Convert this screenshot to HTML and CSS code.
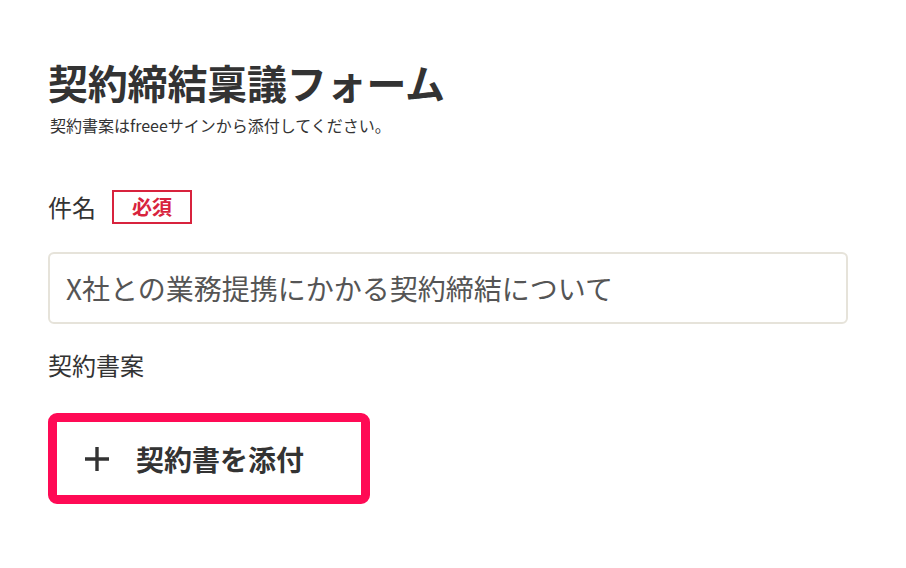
FILE: index.html
```html
<!DOCTYPE html>
<html lang="ja">
<head>
<meta charset="utf-8">
<link rel="stylesheet" href="styles.css">
</head>
<body>
<main class="form">
  <header class="head">
    <h1 class="title">契約締結稟議フォーム</h1>
    <p class="lead">契約書案はfreeeサインから添付してください。</p>
  </header>
  <section class="field">
    <div class="label-row">
      <span class="label">件名</span>
      <span class="badge">必須</span>
    </div>
    <div class="input">X社との業務提携にかかる契約締結について</div>
  </section>
  <section class="field field-attach">
    <div class="label-row">
      <span class="label">契約書案</span>
    </div>
    <div class="attach">
      <span class="plus"><svg width="24" height="24" viewBox="0 0 24 24"><path d="M12 0V24M0 12H24" stroke="#333" stroke-width="3.4" fill="none"/></svg></span>
      <span class="attach-text">契約書を添付</span>
    </div>
  </section>
</main>
</body>
</html>
```
FILE: styles.css
```css
html, body {
  margin: 0;
  padding: 0;
  background: #fff;
}
body {
  font-family: "Noto Sans CJK JP", "Noto Sans", sans-serif;
  color: #333;
  width: 906px;
  height: 568px;
  overflow: hidden;
}
.form {
  padding: 54px 0 0 48px;
  width: 800px;
}
.title {
  margin: 0;
  font-size: 40px;
  line-height: 56px;
  font-weight: 700;
  color: #333;
  letter-spacing: -0.2px;
}
.lead {
  margin: 4px 0 0 2px;
  font-size: 16px;
  line-height: 22px;
  color: #333;
}
.field {
  margin-top: 54px;
}
.label-row {
  display: flex;
  align-items: center;
  gap: 16px;
}
.label {
  font-size: 24px;
  line-height: 34px;
}
.badge {
  box-sizing: border-box;
  width: 80px;
  height: 34px;
  border: 2px solid #d8233d;
  color: #d8233d;
  font-weight: 700;
  font-size: 20px;
  line-height: 30px;
  text-align: center;
}
.input {
  box-sizing: border-box;
  margin-top: 28px;
  height: 72px;
  border: 2px solid #e6e3da;
  border-radius: 6px;
  padding: 0 16px;
  font-size: 28px;
  line-height: 68px;
  color: #555;
}
.field-attach {
  margin-top: 24px;
}
.attach {
  box-sizing: border-box;
  margin-top: 31px;
  width: 322px;
  height: 91px;
  border: 9px solid #ff0a55;
  border-radius: 9px;
  display: flex;
  align-items: center;
  padding-left: 28px;
}
.plus {
  display: flex;
  width: 24px;
  height: 24px;
}
.attach-text {
  margin-left: 27px;
  font-size: 28px;
  font-weight: 700;
  color: #333;
}
```
